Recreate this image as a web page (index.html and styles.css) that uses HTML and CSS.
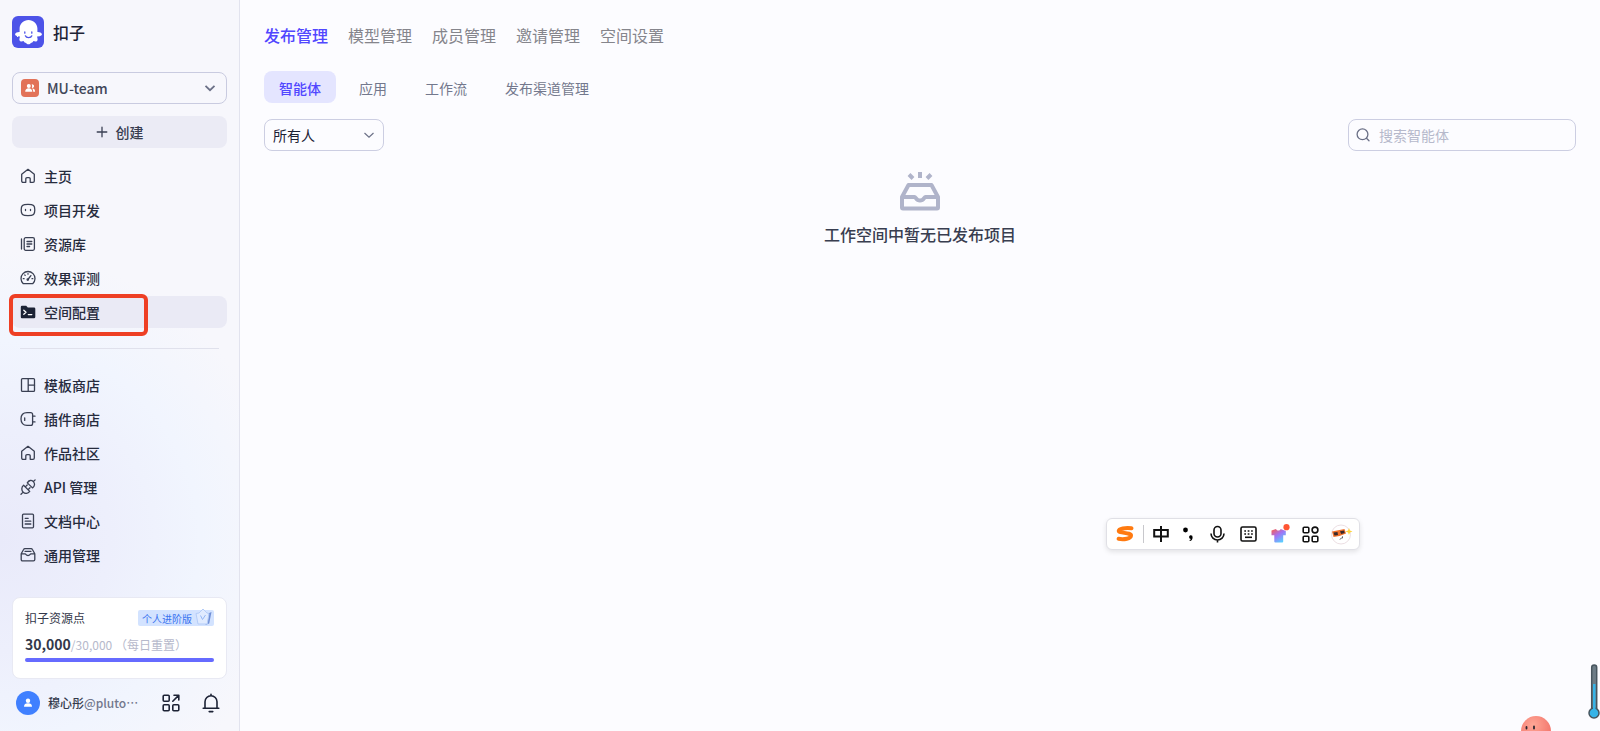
FILE: index.html
```html
<!DOCTYPE html>
<html lang="zh-CN">
<head>
    <meta charset="UTF-8">
    <meta name="viewport" content="width=device-width, initial-scale=1.0">
    <title>扣子 - 空间配置</title>
    <link rel="stylesheet" href="styles.css">
</head>
<body>
    <div class="app">
        <!-- 侧边栏 -->
        <aside class="sidebar">
            <a class="brand" href="#">
                <svg class="brand-logo" viewBox="0 0 32 32" aria-hidden="true">
                    <rect width="32" height="32" rx="6" fill="#4d53e8"/>
                    <path fill="#fff" d="M16.500 4C11.600 4 7.600 7.700 7.600 12.500v3.500c-2-.1-4.200.6-4.500 2-.3 1.500 2 2.500 4.900 2.600-.6 1.900-1 3.600 0 4.500.9.800 2.500.5 3.500 0 .6 1.300 1.700 1.900 2.600 1.900.4.700 1.400 1.300 2.400 1.300s2-.6 2.300-1.300c.9 0 2.100-.6 2.700-1.900 1 .5 2.700.8 3.500 0 1-.9.600-2.600 0-4.500 2.900-.1 5.200-1.100 4.900-2.600-.3-1.400-2.500-2.100-4.500-2v-3.500C25.400 7.700 21.400 4 16.500 4z"/>
                    <path fill="none" stroke="#4d53e8" stroke-width="1.300" stroke-linecap="round" d="M12.800 16v1.200M19.800 16v1.200M13.400 19.800c.8 2.400 5.600 2.400 6.400 0"/>
                </svg>
                <span>扣子</span>
            </a>

            <div class="team-select">
                <svg class="team-icon" viewBox="0 0 18 18" aria-hidden="true">
                    <rect width="18" height="18" rx="4" fill="#e27258"/>
                    <g fill="#fff"><circle cx="7.800" cy="6.900" r="2"/><path d="M4.200 12.800c0-2.300 1.300-3.500 3.500-3.500s3.600 1.200 3.600 3.500zM10.600 5.500a1.800 1.800 0 1 1 .2 3.400c.5-1 .5-2.300-.2-3.400zM12.200 12.800c0-1.400-.3-2.400-1-3.300 1.900-.1 2.900 1.100 2.900 3.300z"/></g>
                </svg>
                <select aria-label="工作空间">
                    <option>MU-team</option>
                </select>
                <svg class="chevron" viewBox="0 0 16 16" aria-hidden="true"><path d="M3.500 5.800 8 10.200l4.500-4.400" stroke-width="1.800"/></svg>
            </div>

            <button class="create-btn" type="button">
                <svg class="icon" viewBox="0 0 16 16" aria-hidden="true"><path d="M8 3.200v9.600M3.200 8h9.600"/></svg>
                <span>创建</span>
            </button>

            <nav class="nav">
                <a class="nav-item" href="#">
                    <svg class="icon" viewBox="0 0 16 16" aria-hidden="true"><path d="M1.700 6.300 8 1.300l6.300 5V13a1.300 1.300 0 0 1-1.300 1.300h-2.800v-3.400a1.200 1.200 0 0 0-1.200-1.200H7a1.200 1.200 0 0 0-1.200 1.200v3.400H3A1.300 1.300 0 0 1 1.700 13z"/></svg>
                    <span>主页</span>
                </a>
                <a class="nav-item" href="#">
                    <svg class="icon" viewBox="0 0 16 16" aria-hidden="true"><path d="M1.200 8c0-4.300 1-5.600 6.800-5.600s6.800 1.300 6.800 5.600-1 5.600-6.800 5.600S1.200 12.300 1.200 8zM5.500 7.400v1.200M10.500 7.400v1.200"/></svg>
                    <span>项目开发</span>
                </a>
                <a class="nav-item" href="#">
                    <svg class="icon" viewBox="0 0 16 16" aria-hidden="true"><rect x="4.200" y="1.700" width="10.200" height="12.600" rx="1.500"/><path d="M1.500 3v10M7 5.500h4.800M7 8h4.800M7 10.500h2.600"/></svg>
                    <span>资源库</span>
                </a>
                <a class="nav-item" href="#">
                    <svg class="icon" viewBox="0 0 16 16" aria-hidden="true"><path d="M3.300 13.700a7 7 0 1 1 9.400 0zM8.300 9l2.600-3.400M8 3.600v.6M4.800 5l.4.400M3.300 8.700h.8M12 8.700h.8"/><circle cx="7.800" cy="9.600" r=".7"/></svg>
                    <span>效果评测</span>
                </a>
                <a class="nav-item active" href="#" aria-current="page">
                    <svg class="icon" viewBox="0 0 16 16" aria-hidden="true"><path fill="#1c2235" stroke="none" d="M.8 3A1.200 1.200 0 0 1 2 1.800h4.200l1.600 1.700H14a1.300 1.300 0 0 1 1.300 1.300V13a1.300 1.300 0 0 1-1.300 1.300H2A1.200 1.200 0 0 1 .8 13z"/><path stroke="#fff" d="m3.800 6.300 2.200 2-2.200 2M8.300 10.600h3.500"/></svg>
                    <span>空间配置</span>
                    <span class="highlight-box"></span>
                </a>
            </nav>

            <hr class="divider">

            <nav class="nav">
                <a class="nav-item" href="#">
                    <svg class="icon" viewBox="0 0 16 16" aria-hidden="true"><rect x="1.500" y="1.600" width="13" height="12.800" rx="1"/><path d="M8.200 1.600v12.800M8.200 8.200h6.300"/></svg>
                    <span>模板商店</span>
                </a>
                <a class="nav-item" href="#">
                    <svg class="icon" viewBox="0 0 16 16" aria-hidden="true"><path d="M12.600 3.600c0-1.200-.7-1.900-1.900-1.900H7C3 1.700 1 4.200 1 8s2 6.300 6 6.300h3.700c1.200 0 1.900-.7 1.900-1.900zM4.700 6.800v2.600M12.800 5.200h2.200M12.800 10.900h2.200"/></svg>
                    <span>插件商店</span>
                </a>
                <a class="nav-item" href="#">
                    <svg class="icon" viewBox="0 0 16 16" aria-hidden="true"><path d="M1.700 6.300 8 1.300l6.300 5V13a1.300 1.300 0 0 1-1.300 1.300h-2.800v-3.400a1.200 1.200 0 0 0-1.200-1.200H7a1.200 1.200 0 0 0-1.200 1.200v3.400H3A1.300 1.300 0 0 1 1.700 13z"/></svg>
                    <span>作品社区</span>
                </a>
                <a class="nav-item" href="#">
                    <svg class="icon" viewBox="0 0 16 16" aria-hidden="true"><path d="M3.600 6.300 9.700 12.400C8 14.800 5 15 3.200 13.200S1.200 8.200 3.600 6.300zM7.300 3.900C9 1 11.500.8 13.300 2.600s1.600 4.600-.8 6.300zM2.900 13.400 1 15.200M13.500 2.500l1.600-1.600M5.300 7.900l1.900-1.900M8.100 10.700l1.900-1.900"/></svg>
                    <span>API 管理</span>
                </a>
                <a class="nav-item" href="#">
                    <svg class="icon" viewBox="0 0 16 16" aria-hidden="true"><rect x="2.500" y="1.200" width="11" height="13.600" rx="1"/><path d="M5.200 5.300h3M5.200 8.200h5.600M5.200 11h5.600"/></svg>
                    <span>文档中心</span>
                </a>
                <a class="nav-item" href="#">
                    <svg class="icon" viewBox="0 0 16 16" aria-hidden="true"><path d="M1.200 6.800 3.600 2.500a1.500 1.500 0 0 1 1.300-.8h6.200a1.500 1.500 0 0 1 1.300.8l2.400 4.300v5.700a1.300 1.300 0 0 1-1.300 1.300h-11a1.300 1.300 0 0 1-1.300-1.300zM1.400 6.800h3.800c.7 0 .7 1.700 2.800 1.700s2.100-1.700 2.800-1.700h3.800M5 4.300h6"/></svg>
                    <span>通用管理</span>
                </a>
            </nav>

            <!-- 资源点与用户 -->
            <div class="sidebar-bottom">
                <section class="quota">
                    <div class="quota-head">
                        <span>扣子资源点</span>
                        <span class="plan-badge">个人进阶版
                            <svg class="plan-gem" viewBox="0 0 18 18" aria-hidden="true">
                                <path fill="#6f8fd6" d="M14 5.500 17.500 4l-2.300 11.500-3.700 1.500z"/>
                                <path fill="#e0ebff" stroke="#b5cdf8" d="M2 5.500 5 5l4-4 4 4 2 .5-1.800 10.500H4z"/>
                                <path fill="none" stroke="#95b8f5" d="m6.500 7.500 2 4 3-4.500"/>
                            </svg>
                        </span>
                    </div>
                    <div class="quota-num"><strong>30,000</strong><span>/30,000 （每日重置）</span></div>
                    <div class="quota-bar"></div>
                </section>
                <div class="user-row">
                    <svg class="avatar" viewBox="0 0 24 24" aria-hidden="true"><circle cx="12" cy="12" r="12" fill="#4080ff"/><circle cx="12" cy="9.800" r="2.200" fill="#fff"/><path fill="#fff" d="M8 15.800c0-2.400 1.300-3.500 4-3.500s4 1.100 4 3.500z"/></svg>
                    <span class="user-name"><b>穆心彤</b>@pluto…</span>
                    <button class="icon-btn" type="button" aria-label="更多应用">
                        <svg viewBox="0 0 20 20" aria-hidden="true"><rect x="2.200" y="2.200" width="6" height="6" rx="1"/><rect x="2.200" y="11.800" width="6" height="6" rx="1"/><rect x="11.800" y="11.800" width="6" height="6" rx="1"/><path d="m11.800 8.200 5.800-5.800M13 2.200h4.800V7"/></svg>
                    </button>
                    <button class="icon-btn" type="button" aria-label="通知">
                        <svg viewBox="0 0 20 20" aria-hidden="true"><path d="M4 15V8.800a6 6 0 0 1 12 0V15M2.200 15.200h15.600M10 1.200v1.400M8.200 18.600h3.600"/></svg>
                    </button>
                </div>
            </div>
        </aside>

        <!-- 主内容 -->
        <main class="main">
            <nav class="tabs">
                <a class="tab active" href="#">发布管理</a>
                <a class="tab" href="#">模型管理</a>
                <a class="tab" href="#">成员管理</a>
                <a class="tab" href="#">邀请管理</a>
                <a class="tab" href="#">空间设置</a>
            </nav>

            <div class="sub-tabs">
                <button class="sub-tab active" type="button">智能体</button>
                <button class="sub-tab" type="button">应用</button>
                <button class="sub-tab" type="button">工作流</button>
                <button class="sub-tab" type="button">发布渠道管理</button>
            </div>

            <div class="filters">
                <div class="owner-select">
                    <select aria-label="创建者">
                        <option>所有人</option>
                    </select>
                    <svg class="chevron" viewBox="0 0 16 16" aria-hidden="true"><path d="M3.500 6 8 10.200 12.500 6"/></svg>
                </div>
                <label class="search">
                    <svg class="search-icon" viewBox="0 0 16 16" aria-hidden="true"><circle cx="7.500" cy="7.300" r="5.400"/><path d="m11.500 11.300 2.500 2.500"/></svg>
                    <input type="text" placeholder="搜索智能体" aria-label="搜索智能体">
                </label>
            </div>

            <div class="empty">
                <svg class="empty-icon" viewBox="0 0 40 40" aria-hidden="true">
                    <path fill="none" stroke="#b0b4ca" stroke-width="4" stroke-linejoin="round" d="M2 25 8.500 13h23L38 25v10.500a1 1 0 0 1-1 1H3a1 1 0 0 1-1-1z"/>
                    <path fill="none" stroke="#b0b4ca" stroke-width="4" d="M2 25h12.500c1.500 0 1.500 3.500 5.500 3.500s4-3.500 5.500-3.500H38"/>
                    <path fill="none" stroke="#b0b4ca" stroke-width="4" d="M20 0v6M9 2.500l4 4M31 2.500l-4 4"/>
                </svg>
                <p>工作空间中暂无已发布项目</p>
            </div>
        </main>
    </div>

    <!-- 输入法悬浮条 -->
    <div class="ime-bar">
        <svg width="18" height="18" viewBox="0 0 18 18" aria-hidden="true"><path fill="none" stroke="#ff7a10" stroke-width="4" stroke-linecap="round" stroke-linejoin="round" d="M15.500 3.200C9 2.600 3 3.500 2.800 5.800c-.3 2.700 12.400 1.400 12.200 4.800-.2 3-7 4.200-12.400 3.200"/></svg>
        <span class="ime-split"></span>
        <svg class="ime-zh" width="24" height="18" viewBox="0 0 16 18" aria-hidden="true"><path d="M1.200 5h13.600v6.500H1.200zM8 1v16"/></svg>
        <svg class="ime-punct" width="24" height="16" viewBox="0 0 10 16" aria-hidden="true"><circle cx="2.500" cy="4" r="2.400"/><path d="M7.400 9.200a2 2 0 0 1 2.200 2.200c0 2-1.100 3.300-2.800 3.600l-.3-.9c.8-.3 1.200-.7 1.300-1.200a1.900 1.900 0 0 1-.4-3.700z"/></svg>
        <svg class="ime-line" width="31" height="18" viewBox="0 0 16 18" aria-hidden="true"><rect x="4.500" y="1.500" width="7" height="10.500" rx="3.500"/><path d="M1.500 8.500a6.500 6.500 0 0 0 13 0M8 15v2.500"/></svg>
        <svg class="ime-line" width="31" height="16" viewBox="0 0 17 16" aria-hidden="true"><rect x="1" y="1" width="15" height="14" rx="1.500"/><path stroke-dasharray="1.700 1.700" d="M4.300 5h8.500M4.300 8h8.500"/><path d="M5 11.300h7"/></svg>
        <svg width="31" height="20" viewBox="0 0 17 20" aria-hidden="true">
            <defs><linearGradient id="shirt" x1="0" y1="0" x2=".7" y2="1"><stop offset="0" stop-color="#ff5b45"/><stop offset=".5" stop-color="#a272f5"/><stop offset="1" stop-color="#58d0ff"/></linearGradient></defs>
            <path fill="url(#shirt)" d="M5 5c1.200 2 3.500 2 4.700 0L14.800 7v4.200h-2.600v6.200a1 1 0 0 1-1 1H4.300a1 1 0 0 1-1-1v-6.200H.5V6.500z"/>
            <circle cx="15.500" cy="3.200" r="3.100" fill="#ff5533"/>
        </svg>
        <svg class="ime-line" width="31" height="17" viewBox="0 0 17 17" aria-hidden="true"><rect x="1.200" y="1.200" width="5.600" height="5.600" rx="1"/><circle cx="13" cy="4" r="2.900"/><rect x="1.200" y="10.200" width="5.600" height="5.600" rx="1"/><rect x="10.200" y="10.200" width="5.600" height="5.600" rx="1"/></svg>
        <svg width="31" height="22" viewBox="0 0 22 22" aria-hidden="true">
            <circle cx="10.500" cy="11.500" r="9.500" fill="#fff" stroke="#ecdfe3"/>
            <path fill="#f0702a" d="M1.500 8.500 14 6l1.500 4.500L9 13l-6 1z"/>
            <path fill="#392a2c" d="m3 9.500 4-.6.5 3-3.500.6zM9.500 8.300l4-.8.7 2.500-3.500 1z"/>
            <path fill="none" stroke="#333" d="m9.500 16.500 1-1.200M12 13.500l-.5 2"/>
            <path fill="#ffd43a" d="m18.500 5 .9 2.600 2.600.9-2.600.9-.9 2.600-.9-2.600-2.600-.9 2.600-.9z"/>
        </svg>
    </div>

    <!-- 桌面小挂件 -->
    <svg class="thermometer" viewBox="0 0 12 56" aria-hidden="true">
        <rect x="3.700" y="1" width="5" height="46" rx="2.500" fill="#6d7c86" stroke="#48555e" stroke-width="1.500"/>
        <circle cx="6" cy="49" r="5" fill="#36b4e8" stroke="#48555e" stroke-width="1.500"/>
        <path fill="#36b4e8" d="M5 20h2.500v27H5z"/>
    </svg>
    <svg class="mascot" viewBox="0 0 30 15" aria-hidden="true">
        <defs><radialGradient id="ball" cx=".4" cy=".3" r=".8"><stop offset="0" stop-color="#ffa796"/><stop offset="1" stop-color="#f06a62"/></radialGradient></defs>
        <circle cx="15" cy="15" r="15" fill="url(#ball)"/>
        <path stroke="#2c2730" stroke-width="1.800" stroke-linecap="round" d="M5.500 11v1.500M13 10.500v2"/>
    </svg>
</body>
</html>
```

FILE: styles.css
```css
* {
    margin: 0;
    padding: 0;
    box-sizing: border-box;
}

body {
    font-family: "Noto Sans CJK SC", "Noto Sans", sans-serif;
    font-size: 14px;
    line-height: 20px;
    color: #1c2235;
    background-color: #fcfcff;
    overflow: hidden;
}

a {
    color: inherit;
    text-decoration: none;
}

button, select, input {
    font: inherit;
    color: inherit;
    border: none;
    background: none;
    outline: none;
    appearance: none;
}

button, select {
    cursor: pointer;
}

svg {
    flex: none;
}

.app {
    display: flex;
    min-height: 100vh;
}

/* 侧边栏 */
.sidebar {
    display: flex;
    flex-direction: column;
    flex: none;
    width: 240px;
    min-height: 100vh;
    padding: 16px 12px;
    border-right: 1px solid #e2e3ee;
    background: radial-gradient(circle at 0 540px, #e9eafa 0, #edeffc 110px, #f1f5fe 200px, #f7f7fc 290px);
}

.brand {
    display: flex;
    align-items: center;
    gap: 9px;
    font-size: 16px;
    font-weight: 500;
}

.brand-logo {
    width: 32px;
    height: 32px;
}

.team-select {
    display: flex;
    align-items: center;
    height: 32px;
    margin-top: 24px;
    padding: 0 8px;
    border: 1px solid #c9cbe0;
    border-radius: 8px;
}

.team-select select {
    flex: 1;
    padding-left: 8px;
    color: #414659;
    font-weight: 500;
}

.team-icon {
    width: 18px;
    height: 18px;
}

.chevron {
    width: 16px;
    height: 16px;
    fill: none;
    stroke: #6b7087;
    stroke-width: 1.2;
    pointer-events: none;
}

.create-btn {
    display: flex;
    align-items: center;
    justify-content: center;
    gap: 6px;
    height: 32px;
    margin-top: 12px;
    padding-right: 2px;
    border-radius: 8px;
    background-color: #ebebf5;
    color: #383d50;
    font-weight: 500;
}

.icon {
    width: 16px;
    height: 16px;
    fill: none;
    stroke: #3a4053;
    stroke-width: 1.3;
    stroke-linecap: round;
    stroke-linejoin: round;
}

.nav {
    display: flex;
    flex-direction: column;
    gap: 2px;
    margin-top: 12px;
}

.nav-item {
    position: relative;
    display: flex;
    align-items: center;
    gap: 8px;
    height: 32px;
    padding: 0 8px;
    border-radius: 8px;
    font-weight: 500;
    color: #262b3d;
}

.nav-item.active {
    background-color: #eaeaf5;
}

.highlight-box {
    position: absolute;
    top: -2px;
    left: -3px;
    width: 139px;
    height: 42px;
    border: 4px solid #ee3f24;
    border-radius: 6px;
}

.divider {
    margin: 20px 8px 8px;
    border: none;
    border-top: 1px solid #e0e1ec;
}

.sidebar-bottom {
    margin-top: auto;
}

.quota {
    height: 82px;
    padding: 10px 12px;
    border: 1px solid #e8e9f3;
    border-radius: 8px;
    background-color: #fff;
}

.quota-head {
    display: flex;
    align-items: center;
    justify-content: space-between;
    font-size: 12px;
    color: #33384a;
}

.plan-badge {
    position: relative;
    height: 16px;
    padding: 0 22px 0 4px;
    border-radius: 2px;
    background-color: #d3e3ff;
    color: #3a73f0;
    font-size: 10px;
    line-height: 17px;
}

.plan-gem {
    position: absolute;
    right: 2px;
    bottom: 0;
    width: 18px;
    height: 18px;
}

.quota-num {
    margin-top: 6px;
    font-size: 12px;
    color: #b6b9cb;
}

.quota-num strong {
    font-size: 14px;
    font-weight: 600;
    color: #33384a;
}

.quota-bar {
    height: 4px;
    margin-top: 3px;
    border-radius: 2px;
    background-color: #666bff;
}

.user-row {
    display: flex;
    align-items: center;
    height: 24px;
    margin-top: 12px;
    padding: 0 6px 0 4px;
}

.avatar {
    width: 24px;
    height: 24px;
}

.user-name {
    flex: 1;
    margin-left: 8px;
    font-size: 12px;
    font-weight: 500;
    color: #73788d;
    white-space: nowrap;
}

.user-name b {
    font-weight: 500;
    color: #33384a;
}

.icon-btn {
    flex: none;
    width: 20px;
    height: 20px;
    margin-left: 20px;
}

.icon-btn svg {
    display: block;
    fill: none;
    stroke: #1c2235;
    stroke-width: 1.6;
    stroke-linecap: round;
    stroke-linejoin: round;
}

/* 主内容 */
.main {
    flex: 1;
    padding: 23px 24px;
}

.tabs {
    display: flex;
    gap: 20px;
    font-size: 16px;
    line-height: 24px;
    color: #85858c;
}

.tab.active {
    color: #5147ff;
    font-weight: 500;
}

.sub-tabs {
    display: flex;
    gap: 8px;
    margin-top: 24px;
}

.sub-tab {
    height: 32px;
    padding: 1px 15px 0;
    border-radius: 8px;
    color: #73788d;
}

.sub-tab.active {
    background-color: #e4e5ff;
    color: #5147ff;
    font-weight: 500;
}

.filters {
    display: flex;
    justify-content: space-between;
    margin-top: 16px;
}

.owner-select, .search {
    display: flex;
    align-items: center;
    height: 32px;
    padding: 0 8px;
    border: 1px solid #cccee2;
    border-radius: 8px;
}

.owner-select {
    width: 120px;
    padding-right: 6px;
}

.owner-select select {
    flex: 1;
}

.search {
    gap: 8px;
    width: 228px;
    padding-left: 6px;
}

.search input {
    flex: 1;
    min-width: 0;
}

.search input::placeholder {
    color: #b6b9cb;
}

.search-icon {
    width: 16px;
    height: 16px;
    fill: none;
    stroke: #6b7087;
    stroke-width: 1.3;
    stroke-linecap: round;
}

.empty {
    display: flex;
    flex-direction: column;
    align-items: center;
    margin-top: 21px;
    font-size: 16px;
    font-weight: 500;
    line-height: 24px;
    color: #393e50;
}

.empty-icon {
    width: 40px;
    height: 40px;
    margin-bottom: 10px;
}

/* 悬浮元素 */
.ime-bar {
    position: fixed;
    right: 240px;
    bottom: 181px;
    display: flex;
    align-items: center;
    width: 254px;
    height: 32px;
    padding-left: 9px;
    border: 1px solid #e0e0e6;
    border-radius: 6px;
    background-color: #fff;
    box-shadow: 0 2px 5px rgba(0, 0, 0, 0.1);
}

.ime-split {
    width: 1px;
    height: 18px;
    margin: 0 5px 0 9px;
    background-color: #c8c8cc;
}

.ime-zh, .ime-line {
    fill: none;
    stroke: #111;
    stroke-width: 2;
}

.ime-line {
    stroke-width: 1.6;
}

.ime-punct {
    margin: 0 2px 0 3px;
}

.thermometer {
    position: fixed;
    right: 0;
    bottom: 11px;
    width: 12px;
    height: 56px;
}

.mascot {
    position: fixed;
    right: 49px;
    bottom: 0;
    width: 30px;
    height: 15px;
}
```
